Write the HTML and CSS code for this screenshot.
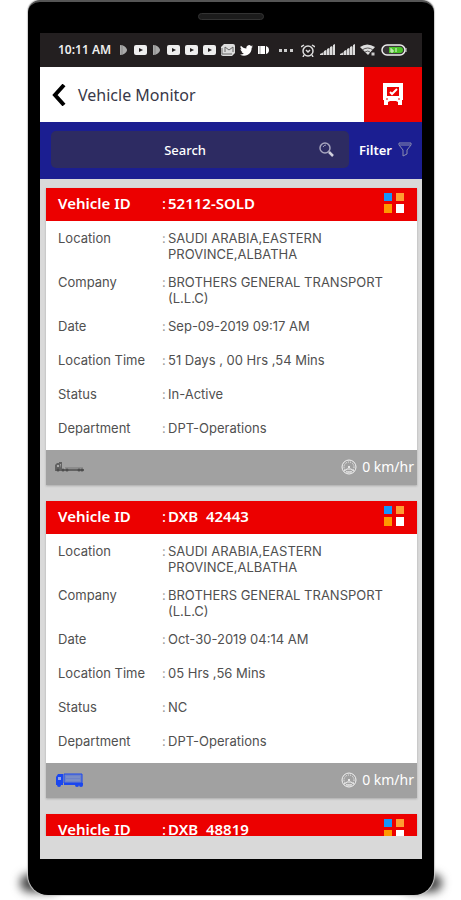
FILE: index.html
```html
<!DOCTYPE html>
<html lang="en">
<head>
<meta charset="utf-8">
<meta name="viewport" content="width=device-width, initial-scale=1">
<title>Vehicle Monitor</title>
<link rel="stylesheet" href="styles.css">
</head>
<body>
<svg class="sprite" aria-hidden="true">
  <symbol id="play" viewBox="0 0 13 10"><rect width="13" height="10" rx="2" fill="#eee"/><path d="M5 3l4 2-4 2z" fill="#231f20"/></symbol>
  <symbol id="half" viewBox="0 0 10 10"><path d="M1 0c4 0 7 3 7 5s-3 5-7 5z" fill="#aaa"/><path d="M3 0v10" stroke="#888"/></symbol>
  <symbol id="signal" viewBox="0 0 15 12"><path d="M0 11h3V9L0 10zM4 11h2V6L4 7zM7 11h2V4L7 5zM10 11h2V2l-2 1zM13 11h2V0l-2 1z" fill="#ddd"/><path d="M0 10L15 1v10H0z" fill="#ddd" opacity=".5"/></symbol>
  <symbol id="gauge" viewBox="0 0 16 16"><g fill="none" stroke="#f2f2f2"><circle cx="8" cy="8" r="7"/><circle cx="8" cy="8" r="5" stroke-dasharray="1 1"/><path d="M3 12l3-2h4l3 2M5 13h6"/></g><circle cx="8" cy="8" r="1" fill="#fff"/></symbol>
  <symbol id="tiles" viewBox="0 0 22 22"><path fill="#1594fa" d="M1 1h8v8H1z"/><path fill="#ff9c32" d="M13 1h8v8h-8z"/><path fill="#ff9800" d="M1 12h8v9H1z"/><path fill="#fff" d="M13 12h8v9h-8z"/></symbol>
</svg>
<div class="phone">
  <div class="earpiece"></div>
  <main class="screen">
    <div class="status">
      <span class="clock">10:11 AM</span>
      <div class="notices">
        <svg width="10" height="10"><use href="#half"/></svg>
        <svg width="13" height="10"><use href="#play"/></svg>
        <svg width="10" height="10"><use href="#half"/></svg>
        <svg width="13" height="10"><use href="#play"/></svg>
        <svg width="13" height="10"><use href="#play"/></svg>
        <svg width="13" height="10"><use href="#play"/></svg>
        <svg width="14" height="12" viewBox="0 0 14 12"><path d="M3 0h9q2 0 2 2v7l-3 3H2q-2 0-2-2V3z" fill="#ddd"/><path d="M4 8V3l4 3 4-3v5M1 4v6h10" fill="none" stroke="#666"/></svg>
        <svg width="13" height="11" viewBox="0 0 24 20"><path fill="#fff" d="M24 2.400c-.9.4-1.800.7-2.800.8 1-.6 1.800-1.600 2.200-2.700-1 .6-2 1-3.100 1.200A4.900 4.900 0 0 0 11.900 6.200C7.800 6 4.100 4 1.700 1A4.900 4.900 0 0 0 3.200 7.600c-.8 0-1.600-.2-2.200-.6 0 2.300 1.600 4.400 3.900 4.900-.7.200-1.500.2-2.200.1.600 2 2.400 3.400 4.600 3.400A9.900 9.900 0 0 1 0 17.400 14 14 0 0 0 21.500 5c1-.7 1.800-1.600 2.500-2.600z"/></svg>
        <svg width="11" height="10" viewBox="0 0 11 10"><path d="M0 1h2v8H0zM2 1h5v8H2zM8 1q3 1 3 4t-3 4z" fill="#fff"/><path d="M2 1v8" stroke="#999"/></svg>
      </div>
      <svg class="more" width="14" height="3" viewBox="0 0 14 3"><path d="M0 0h3v3H0zM5 0h3v3H5zM11 0h3v3h-3z" fill="#ccc"/></svg>
      <div class="system">
        <svg width="14" height="13" viewBox="0 0 14 13"><g fill="none" stroke="#ddd" stroke-width="1.500"><circle cx="7" cy="7" r="5"/><path d="M0 3l3-2M14 3l-3-2M5 6l2 2 2-2M3 11l-1 2M11 11l1 2"/></g></svg>
        <svg width="15" height="12"><use href="#signal"/></svg>
        <svg width="15" height="12"><use href="#signal"/></svg>
        <svg width="16" height="12" viewBox="0 0 16 12"><path d="M0 3q7-5 15 0L8 11z" fill="#ddd"/><path d="M2 6q6-4 11 0M5 8q3-2 5 0" fill="none" stroke="#5a5758"/><path d="M11 8h4v4h-4z" fill="#ccc" stroke="#231f20"/></svg>
        <svg width="26" height="12" viewBox="0 0 26 12"><rect x="1" y="1" width="23" height="10" rx="5" fill="#393637" stroke="#eee" stroke-width="1.500"/><path d="M8 3h11q3 0 3 3t-3 3H8z" fill="#4ac329"/><path d="M10 4v4h2V6h-2M15 4v4" fill="none" stroke="#dff5d8"/><path d="M25 4v4" stroke="#ddd"/></svg>
      </div>
    </div>
    <header class="topbar">
      <button class="back" aria-label="Back"><svg width="14" height="22" viewBox="0 0 14 22"><path d="M12 1L3 11l9 10" fill="none" stroke="#000" stroke-width="4"/></svg></button>
      <h1>Vehicle Monitor</h1>
      <button class="fleet" aria-label="Vehicles"><svg width="22" height="23" viewBox="0 0 22 23"><path fill="#fff" fill-rule="evenodd" d="M1 0h20v17h-1v5h-4v-3l-2-1H8l-2 1v3H2v-5H1zM5 4v9h12V4z"/><path d="M8 9l2 2 5-5" fill="none" stroke="#fff" stroke-width="2"/><path d="M4 16h2M16 16h2" stroke="#e00"/></svg></button>
    </header>
    <div class="tools">
      <label class="search"><input type="text" placeholder="Search" aria-label="Search"><svg width="16" height="16" viewBox="0 0 16 16"><circle cx="6" cy="6" r="5" fill="none" stroke="#a6a5be" stroke-width="1.500"/><path d="M4 5q1-2 3-2" fill="none" stroke="#a6a5be"/><path d="M10 10l4 4" stroke="#d0d0dc" stroke-width="2.500"/></svg></label>
      <button class="filter">Filter <svg width="14" height="15" viewBox="0 0 14 15"><path d="M1 1h12v2L9 8v4l-4 2V8L1 3zM2 3h10" fill="none" stroke="#8a8caf"/></svg></button>
    </div>
    <section class="list">
      <article class="card">
        <h2><span class="name">Vehicle ID</span><span class="mark">:</span><span class="value">52112-SOLD</span><svg width="22" height="22"><use href="#tiles"/></svg></h2>
        <dl>
          <div><dt>Location</dt><dd class="mark">:</dd><dd>SAUDI ARABIA,EASTERN<br>PROVINCE,ALBATHA</dd></div>
          <div><dt>Company</dt><dd class="mark">:</dd><dd>BROTHERS GENERAL TRANSPORT<br>(L.L.C)</dd></div>
          <div><dt>Date</dt><dd class="mark">:</dd><dd>Sep-09-2019 09:17 AM</dd></div>
          <div><dt>Location Time</dt><dd class="mark">:</dd><dd>51 Days , 00 Hrs ,54 Mins</dd></div>
          <div><dt>Status</dt><dd class="mark">:</dd><dd>In-Active</dd></div>
          <div><dt>Department</dt><dd class="mark">:</dd><dd>DPT-Operations</dd></div>
        </dl>
        <footer>
          <svg width="30" height="12" viewBox="0 0 30 12"><path d="M0 9V4l2-2h2V1h3v7h22v2H0z" fill="#626262"/><path d="M2 4h2v2H2zM5 3h1v4" fill="#aaa"/><path d="M10 7h18" stroke="#777"/><g fill="#4c4c4c"><circle cx="3" cy="9" r="1.500"/><circle cx="8" cy="9" r="1.500"/><circle cx="12" cy="9" r="1.500"/><circle cx="24" cy="9" r="1.500"/><circle cx="27" cy="9" r="1.500"/></g></svg>
          <span class="speed"><svg width="16" height="16"><use href="#gauge"/></svg>0 km/hr</span>
        </footer>
      </article>
      <article class="card">
        <h2><span class="name">Vehicle ID</span><span class="mark">:</span><span class="value">DXB&nbsp; 42443</span><svg width="22" height="22"><use href="#tiles"/></svg></h2>
        <dl>
          <div><dt>Location</dt><dd class="mark">:</dd><dd>SAUDI ARABIA,EASTERN<br>PROVINCE,ALBATHA</dd></div>
          <div><dt>Company</dt><dd class="mark">:</dd><dd>BROTHERS GENERAL TRANSPORT<br>(L.L.C)</dd></div>
          <div><dt>Date</dt><dd class="mark">:</dd><dd>Oct-30-2019 04:14 AM</dd></div>
          <div><dt>Location Time</dt><dd class="mark">:</dd><dd>05 Hrs ,56 Mins</dd></div>
          <div><dt>Status</dt><dd class="mark">:</dd><dd>NC</dd></div>
          <div><dt>Department</dt><dd class="mark">:</dd><dd>DPT-Operations</dd></div>
        </dl>
        <footer>
          <svg width="30" height="14" viewBox="0 0 30 14"><path d="M1 12V4l2-3h5v11zM9 10h19v2H9z" fill="#1b47ef"/><path d="M9 1h18v9H9z" fill="#6d82c8" stroke="#1b47ef"/><path d="M11 4h14M11 7h14" stroke="#8797c6"/><path d="M3 4h3v3H3z" fill="#8fa2e6"/><g fill="#1b47ef"><circle cx="4" cy="12" r="2"/><circle cx="22" cy="12" r="2"/><circle cx="26" cy="12" r="2"/></g></svg>
          <span class="speed"><svg width="16" height="16"><use href="#gauge"/></svg>0 km/hr</span>
        </footer>
      </article>
      <article class="card">
        <h2><span class="name">Vehicle ID</span><span class="mark">:</span><span class="value">DXB&nbsp; 48819</span><svg width="22" height="22"><use href="#tiles"/></svg></h2>
      </article>
    </section>
  </main>
</div>
</body>
</html>
```

FILE: styles.css
```css
* { box-sizing: border-box; }
body {
  margin: 0;
  height: 100vh;
  padding: 0 27px 5px 28px;
  background: #fff;
  font-family: "Noto Sans", sans-serif;
  font-size: 13px;
  line-height: 16px;
  color: #505050;
  overflow: hidden;
}
button { border: 0; padding: 0; background: none; font: inherit; }
svg { display: block; flex: none; }
.sprite { position: absolute; width: 0; height: 0; }
.phone {
  height: 100%;
  display: flex;
  flex-direction: column;
  padding: 0 12px 36px;
  background: #000;
  border-top: 2px solid #555;
  border-radius: 12px 12px 20px 20px;
  box-shadow: 0 0 1px 1px #ccc;
}
.phone::before, .phone::after {
  content: "";
  position: absolute;
  z-index: -1;
  bottom: 8px;
  width: 40px;
  height: 18px;
  border-radius: 12px;
  background: #444;
  filter: blur(5px);
}
.phone::before { left: 20px; }
.phone::after { right: 19px; }
.earpiece {
  flex: none;
  width: 66px;
  height: 7px;
  margin: 11px auto 13px;
  border: 1px solid #333;
  border-radius: 4px;
  background: #1c1c1c;
}
.screen {
  flex: 1;
  min-height: 0;
  display: flex;
  flex-direction: column;
  background: #d9d9d9;
  padding-bottom: 23px;
}
.status {
  flex: none;
  height: 34px;
  display: flex;
  align-items: center;
  padding: 0 15px 0 18px;
  background: #231f20;
  color: #eee;
}
.clock { font-size: 12px; font-weight: 600; white-space: nowrap; }
.notices, .system { display: flex; align-items: center; gap: 5px; }
.notices { margin-left: 8px; }
.more { margin: 0 8px 0 auto; }
.topbar {
  flex: none;
  height: 55px;
  display: flex;
  align-items: center;
  background: #fff;
}
.back { padding: 0 12px; }
h1 { flex: 1; margin: 0; font-size: 16px; line-height: 24px; font-weight: 400; color: #383848; }
.fleet {
  width: 58px;
  height: 100%;
  display: grid;
  place-items: center;
  background: #ec0000;
}
.tools {
  flex: none;
  height: 57px;
  display: flex;
  align-items: center;
  gap: 10px;
  padding: 0 10px 2px 11px;
  background: #1b1e91;
}
.search {
  flex: 1;
  min-width: 0;
  height: 37px;
  display: flex;
  align-items: center;
  padding-right: 14px;
  border-radius: 5px;
  background: #2d2b62;
}
.search input {
  flex: 1;
  min-width: 0;
  border: 0;
  outline: 0;
  background: none;
  color: #fff;
  font: 500 13px/16px "Noto Sans", sans-serif;
  text-align: center;
}
.search input::placeholder { color: #fff; opacity: 1; }
.filter { display: flex; align-items: center; gap: 6px; color: #fff; font-weight: 600; }
.list {
  flex: 1;
  min-height: 0;
  overflow: hidden;
  display: flex;
  flex-direction: column;
  gap: 16px;
  padding: 9px 5px 0 6px;
}
.card { flex: none; background: #fff; box-shadow: 0 1px 2px #aaa; }
.card h2 {
  display: flex;
  align-items: center;
  height: 33px;
  margin: 0;
  padding: 0 12px 4px;
  background: #ec0000;
  color: #fff;
  font-size: 15px;
  font-weight: 600;
}
.name, dt { width: 104px; flex: none; }
.mark { width: 6px; flex: none; font-weight: 400; }
dl .mark { color: #999; }
.value { flex: 1; white-space: nowrap; }
dl {
  margin: 0;
  padding: 9px 12px 8px;
  display: flex;
  flex-direction: column;
  gap: 12px;
  font-family: Inter, "Noto Sans", sans-serif;
}
dl div { display: flex; min-height: 22px; white-space: nowrap; }
dd { margin: 0; }
footer {
  height: 35px;
  display: flex;
  align-items: center;
  justify-content: space-between;
  padding: 0 3px 2px 9px;
  background: #a1a1a1;
  color: #fff;
}
.speed { display: flex; align-items: center; gap: 5px; font-size: 14px; }
```
